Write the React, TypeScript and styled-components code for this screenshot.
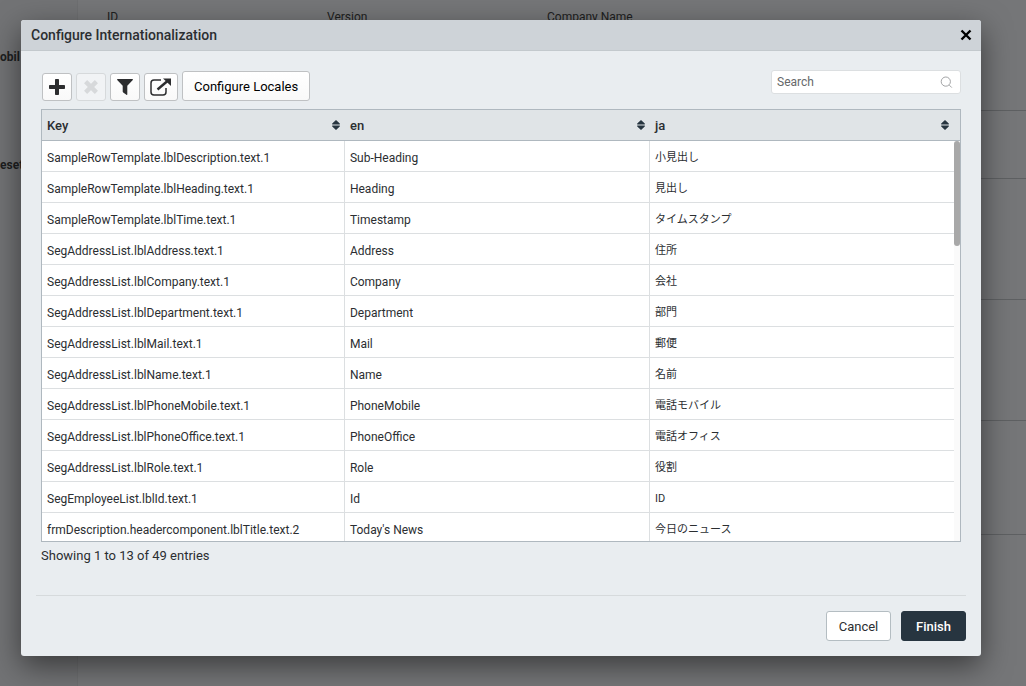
import React from "react";
import styled, { createGlobalStyle } from "styled-components";

const GlobalStyle = createGlobalStyle`
  * { box-sizing: border-box; }
  body {
    margin: 0;
    background: #757678;
    color: #2b2e31;
    font-family: Roboto, "Noto Sans CJK JP", sans-serif;
    font-size: 12px;
  }
  button, input { font-family: inherit; }
`;

const Page = styled.div`
  position: relative;
  min-height: 100vh;
  overflow: hidden;
`;

const Backdrop = styled.div`
  position: absolute;
  inset: 0;
  display: flex;
  color: #1d1e20;
`;

const Sidebar = styled.div`
  flex: none;
  width: 78px;
  padding-top: 49px;
  display: flex;
  flex-direction: column;
  gap: 92px;
  background: #727375;
  border-right: 1px solid #6e6f71;
  font-weight: 700;
  line-height: 16px;
`;

const Main = styled.div`
  flex: 1;
`;

const Section = styled.div<{ $height: number }>`
  height: ${(p) => p.$height}px;
  border-bottom: 1px solid #5e6062;
`;

const Fields = styled.div`
  display: flex;
  padding: 9px 0 0 29px;
  font-size: 12px;
  line-height: 16px;
`;

const Field = styled.span`
  width: 220px;
`;

const Overlay = styled.div`
  position: relative;
  padding: 20px 45px 30px 21px;
`;

const Dialog = styled.div`
  border-radius: 3px;
  background: #e9edf0;
  box-shadow: 0 10px 30px rgba(0, 0, 0, 0.5);
  overflow: hidden;
`;

const TitleBar = styled.header`
  display: flex;
  align-items: center;
  justify-content: space-between;
  height: 31px;
  padding: 0 8px 0 10px;
  background: #ced3d8;
  border-bottom: 1px solid #c3c9cd;
`;

const Title = styled.h1`
  margin: 0;
  font-size: 14px;
  font-weight: 500;
  line-height: 20px;
`;

const CloseButton = styled.button`
  display: flex;
  padding: 0;
  border: 0;
  background: none;
  color: #000;
`;

const Content = styled.div`
  padding: 19px 20px 0;
`;

const Toolbar = styled.div`
  display: flex;
  justify-content: space-between;
  align-items: flex-start;
`;

const Tools = styled.div`
  display: flex;
  align-items: flex-end;
  gap: 4px;
  padding: 1px 0 8px 1px;
`;

const ToolButton = styled.button<{ $wide?: boolean }>`
  display: flex;
  align-items: center;
  justify-content: center;
  width: ${(p) => (p.$wide ? 34 : 30)}px;
  height: 28px;
  padding: 0;
  border: 1px solid #bfc1c3;
  border-radius: 3px;
  background: linear-gradient(#fff, #f9f9f9);
  color: #2c2d2f;
  &:disabled {
    background: #f1f3f5;
    border-color: #d6d9db;
    color: #d7d9db;
  }
`;

const LocalesButton = styled.button`
  height: 30px;
  padding: 0 11px;
  border: 1px solid #bfc1c3;
  border-radius: 3px;
  background: linear-gradient(#fff, #f9f9f9);
  color: #000;
  font-size: 13px;
`;

const SearchBox = styled.label`
  display: flex;
  align-items: center;
  width: 190px;
  height: 24px;
  padding: 0 7px 0 5px;
  border: 1px solid #dcdfe1;
  border-radius: 3px;
  background: #fff;
  color: #8b8d8f;
`;

const SearchInput = styled.input`
  flex: 1;
  min-width: 0;
  padding: 0;
  border: 0;
  outline: 0;
  background: none;
  font-size: 12px;
  &::placeholder {
    color: #66686a;
    opacity: 1;
  }
`;

const Grid = styled.div`
  position: relative;
  height: 433px;
  border: 1px solid #afb8bf;
  background: #fff;
  overflow: hidden;
`;

const Table = styled.table`
  width: 100%;
  table-layout: fixed;
  border-collapse: separate;
  border-spacing: 0;
`;

const KeyColumn = styled.col`
  width: 33%;
`;

const LastColumn = styled.col`
  width: 310px;
`;

const HeadCell = styled.th`
  height: 31px;
  padding: 0 5px;
  background: #e0e4e7;
  border-bottom: 1px solid #afb8bf;
  font-size: 13px;
  font-weight: 500;
  text-align: left;
  &:last-child {
    padding-right: 11px;
  }
`;

const HeadLabel = styled.div`
  display: flex;
  align-items: center;
  justify-content: space-between;
`;

const Cell = styled.td`
  height: 31px;
  padding: 3px 5px 0;
  border-bottom: 1px solid #dcdfe1;
  border-right: 1px solid #dcdfe1;
  font-size: 12px;
  line-height: 16px;
  white-space: nowrap;
  &:last-child {
    border-right: 0;
    font-size: 11px;
  }
`;

const Track = styled.div`
  position: absolute;
  top: 31px;
  right: 0;
  bottom: 0;
  width: 6px;
  background: #fafafa;
`;

const Thumb = styled.div`
  height: 105px;
  border-radius: 3px;
  background: #a8a8a8;
`;

const Summary = styled.p`
  margin: 0;
  padding: 5px 0 31px;
  font-size: 13px;
  line-height: 17px;
`;

const Footer = styled.footer`
  display: flex;
  justify-content: flex-end;
  gap: 10px;
  margin: 0 15px;
  padding: 15px 0;
  border-top: 1px solid #d6dadc;
`;

const ActionButton = styled.button<{ $primary?: boolean }>`
  width: 65px;
  height: 30px;
  padding: 0;
  border: 1px solid ${(p) => (p.$primary ? "#273540" : "#b4bdc2")};
  border-radius: 3px;
  background: ${(p) => (p.$primary ? "#273540" : "#fff")};
  color: ${(p) => (p.$primary ? "#fff" : "#2b2e31")};
  font-size: 13px;
  font-weight: ${(p) => (p.$primary ? 500 : 400)};
`;

const SortIcon = () => (
  <svg width="8" height="10" viewBox="0 0 8 10" fill="#273540" aria-hidden="true">
    <path d="M4 0 7.800 3.600V4.400H.2V3.600ZM.2 5.600H7.800V6.400L4 10 .2 6.400Z" />
  </svg>
);

const PlusIcon = () => (
  <svg width="16" height="16" viewBox="0 0 16 16" fill="currentColor" aria-hidden="true">
    <path d="M6.8 0h2.4q.8 0 .8.8V6h5.2q.8 0 .8.8v2.4q0 .8-.8.8H10v5.2q0 .8-.8.8H6.8q-.8 0-.8-.8V10H.8Q0 10 0 9.200V6.800Q0 6 .8 6H6V.8Q6 0 6.800 0Z" />
  </svg>
);

const RemoveIcon = () => (
  <svg width="14" height="14" viewBox="0 0 14 14" fill="none" stroke="currentColor" strokeWidth="4.400" aria-hidden="true">
    <path d="m1.600 1.600 10.800 10.800M12.400 1.600 1.600 12.400" />
  </svg>
);

const FilterIcon = () => (
  <svg width="16" height="16" viewBox="0 0 16 16" fill="currentColor" aria-hidden="true">
    <path d="M.6 0h14.800q.9 0 .4 1L10.300 6.700V15.300q0 1-.9.4L6.200 13.500q-.5-.4-.5-1V6.700L.2 1Q-.3 0 .6 0Z" />
  </svg>
);

const ExportIcon = () => (
  <svg width="22" height="18" viewBox="0 0 22 18" fill="none" stroke="currentColor" aria-hidden="true">
    <path d="M11 2H4Q1 2 1 5v9q0 3 3 3h9q3 0 3-3V10" strokeWidth="1.500" />
    <path d="M7.500 11.500 17.500 3" strokeWidth="2.400" />
    <path d="M13 .5H21v7.500Z" fill="currentColor" stroke="none" />
  </svg>
);

const CloseIcon = () => (
  <svg width="14" height="14" viewBox="0 0 14 14" fill="none" stroke="currentColor" strokeWidth="2.400" aria-hidden="true">
    <path d="m2.500 2.500 9 9M11.500 2.500l-9 9" />
  </svg>
);

const SearchIcon = () => (
  <svg width="13" height="13" viewBox="0 0 13 13" fill="none" stroke="currentColor" aria-hidden="true">
    <circle cx="5.800" cy="5.600" r="4.600" strokeWidth=".8" />
    <path d="m9.300 9.100 2.500 2.500" strokeWidth=".8" />
  </svg>
);

const columns = ["Key", "en", "ja"];

const entries: [string, string, string][] = [
  ["SampleRowTemplate.lblDescription.text.1", "Sub-Heading", "小見出し"],
  ["SampleRowTemplate.lblHeading.text.1", "Heading", "見出し"],
  ["SampleRowTemplate.lblTime.text.1", "Timestamp", "タイムスタンプ"],
  ["SegAddressList.lblAddress.text.1", "Address", "住所"],
  ["SegAddressList.lblCompany.text.1", "Company", "会社"],
  ["SegAddressList.lblDepartment.text.1", "Department", "部門"],
  ["SegAddressList.lblMail.text.1", "Mail", "郵便"],
  ["SegAddressList.lblName.text.1", "Name", "名前"],
  ["SegAddressList.lblPhoneMobile.text.1", "PhoneMobile", "電話モバイル"],
  ["SegAddressList.lblPhoneOffice.text.1", "PhoneOffice", "電話オフィス"],
  ["SegAddressList.lblRole.text.1", "Role", "役割"],
  ["SegEmployeeList.lblId.text.1", "Id", "ID"],
  ["frmDescription.headercomponent.lblTitle.text.2", "Today's News", "今日のニュース"],
];

export default function App() {
  return (
    <Page>
      <GlobalStyle />
      <Backdrop>
        <Sidebar>
          <span>obil</span>
          <span>eset</span>
        </Sidebar>
        <Main>
          <Section $height={111}>
            <Fields>
              <Field>ID</Field>
              <Field>Version</Field>
              <Field>Company Name</Field>
            </Fields>
          </Section>
          <Section $height={68} />
          <Section $height={121} />
          <Section $height={121} />
          <Section $height={114} />
        </Main>
      </Backdrop>
      <Overlay>
        <Dialog role="dialog" aria-labelledby="dialog-title">
          <TitleBar>
            <Title id="dialog-title">Configure Internationalization</Title>
            <CloseButton aria-label="Close">
              <CloseIcon />
            </CloseButton>
          </TitleBar>
          <Content>
            <Toolbar>
              <Tools>
                <ToolButton aria-label="Add"><PlusIcon /></ToolButton>
                <ToolButton aria-label="Remove" disabled><RemoveIcon /></ToolButton>
                <ToolButton aria-label="Filter"><FilterIcon /></ToolButton>
                <ToolButton aria-label="Export" $wide><ExportIcon /></ToolButton>
                <LocalesButton>Configure Locales</LocalesButton>
              </Tools>
              <SearchBox>
                <SearchInput type="text" placeholder="Search" aria-label="Search" />
                <SearchIcon />
              </SearchBox>
            </Toolbar>
            <Grid>
              <Table>
                <colgroup>
                  <KeyColumn />
                  <col />
                  <LastColumn />
                </colgroup>
                <thead>
                  <tr>
                    {columns.map((name) => (
                      <HeadCell key={name} scope="col">
                        <HeadLabel>
                          {name}
                          <SortIcon />
                        </HeadLabel>
                      </HeadCell>
                    ))}
                  </tr>
                </thead>
                <tbody>
                  {entries.map(([key, en, ja]) => (
                    <tr key={key}>
                      <Cell>{key}</Cell>
                      <Cell>{en}</Cell>
                      <Cell lang="ja">{ja}</Cell>
                    </tr>
                  ))}
                </tbody>
              </Table>
              <Track>
                <Thumb />
              </Track>
            </Grid>
            <Summary>Showing 1 to 13 of 49 entries</Summary>
          </Content>
          <Footer>
            <ActionButton>Cancel</ActionButton>
            <ActionButton $primary>Finish</ActionButton>
          </Footer>
        </Dialog>
      </Overlay>
    </Page>
  );
}
